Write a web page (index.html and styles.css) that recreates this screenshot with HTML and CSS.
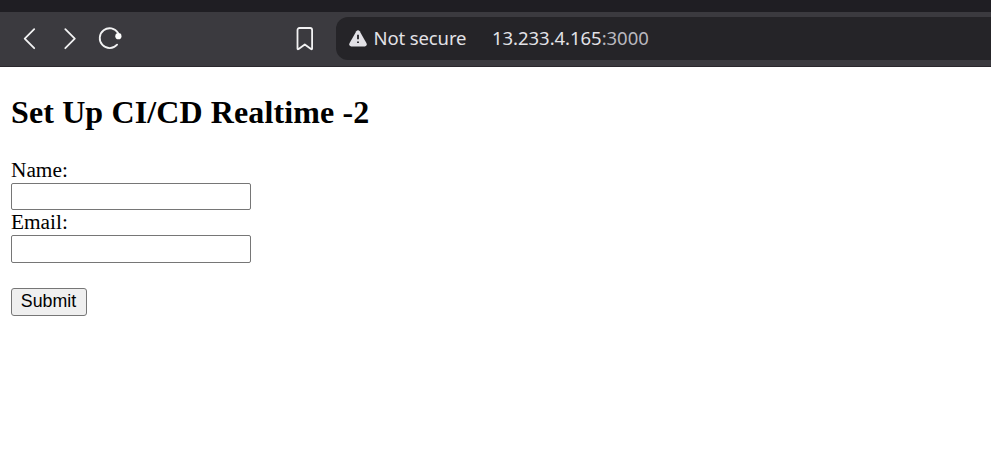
FILE: index.html
```html
<!DOCTYPE html>
<html lang="en">
<head>
<meta charset="utf-8">
<title>Set Up CI/CD</title>
<link rel="stylesheet" href="styles.css">
</head>
<body>
<div class="tabstrip"></div>
<header class="toolbar">
  <nav class="nav">
    <svg width="40" height="54" viewBox="0 0 40 54"><path d="M20.200 17.200 10.700 26.700l9.500 9.500"/></svg>
    <svg width="40" height="54" viewBox="0 0 40 54"><path d="M11.300 17.200 20.800 26.700l-9.500 9.500"/></svg>
    <svg width="40" height="54" viewBox="0 0 40 54"><path d="M23.100 32.700A9.900 9.900 0 1 1 24.100 21"/><circle class="dot" cx="24.400" cy="24.200" r="3.100"/></svg>
  </nav>
  <svg class="bookmark" width="18" height="24" viewBox="0 0 18 24"><path d="M1.500 21.500V3a2 2 0 0 1 2-2h10.600a2 2 0 0 1 2 2V21.500q0 1.200-1.100.500L8.800 17.500l-6.200 4.500Q1.500 22.700 1.500 21.500Z"/></svg>
  <div class="address">
    <svg class="warn" width="18" height="17" viewBox="0 0 18 17"><path class="tri" d="M7.300 1.200q1.700-2 3.400 0l6.800 12q1 2.800-1.700 3.300H2.200Q-.5 16 .5 13.200Z"/><path class="mark" d="M9 4.800v4.500M9 11.600v1.500"/></svg>
    <span class="security">Not secure</span>
    <span class="url">13.233.4.165<span class="port">:3000</span></span>
  </div>
</header>
<main class="page">
  <h2>Set Up CI/CD Realtime -2</h2>
  <form>
    <label for="name">Name:</label>
    <input class="field" id="name" type="text">
    <label for="email">Email:</label>
    <input class="field field-email" id="email" type="text">
    <button type="button">Submit</button>
  </form>
</main>
</body>
</html>
```
FILE: styles.css
```css
* { box-sizing: border-box; }
body { margin: 0; background: #fff; color: #000; font: 21.333px/25px "Liberation Serif", serif; overflow: hidden; }
.tabstrip { height: 12px; background: #1f1e23; }
.toolbar { display: flex; align-items: center; height: 55px; background: #3b3a3f; border-bottom: 1px solid #2b282d; }
.nav { display: flex; width: 296px; padding-left: 14px; }
svg { flex: none; fill: none; stroke: #f2f2f3; stroke-width: 1.8; stroke-linecap: round; stroke-linejoin: round; }
.dot { fill: #fff; stroke: none; }
.bookmark { margin-right: 22px; }
.address { display: flex; align-items: center; flex: 1; height: 43px; margin-bottom: 2px; padding-left: 12.5px; border-radius: 12px 0 0 12px; background: #252428; color: #e2e1e6; font: 18.5px/43px "Noto Sans", sans-serif; white-space: nowrap; }
.tri { fill: #e2e1e6; stroke: none; }
.mark { stroke: #252428; stroke-width: 1.8; stroke-linecap: butt; }
.security { width: 118.5px; margin-left: 7px; letter-spacing: -0.12px; }
.security, .url { padding-bottom: 2px; line-height: 41px; }
.url { letter-spacing: -0.04px; }
.port { color: #b9b8bf; }
.page { padding: 0 11px; }
h2 { margin: 27px 0 28px; font-size: 32px; line-height: 36px; font-weight: bold; letter-spacing: 0.12px; }
form { display: flex; flex-direction: column; align-items: flex-start; }
.field { width: 240px; height: 27px; margin: 0; border: 1px solid #767676; border-radius: 2px; background: #fff; }
.field-email { height: 28px; margin-bottom: 25px; }
button { width: 76px; height: 28px; margin: 0; padding: 0 1px 2px 0; border: 1px solid #767676; border-radius: 3px; background: #efefef; color: #000; font: 17.778px/24px "Liberation Sans", sans-serif; }
```
